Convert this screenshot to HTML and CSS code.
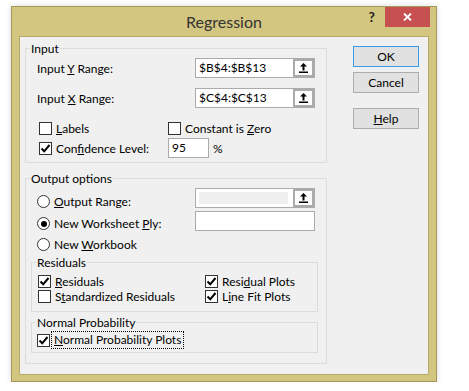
FILE: index.html
```html
<!DOCTYPE html>
<html lang="en">
<head>
    <meta charset="UTF-8">
    <meta name="viewport" content="width=device-width, initial-scale=1.0">
    <title>Regression</title>
    <link rel="stylesheet" href="styles.css">
</head>
<body>
<div class="window">
    <div class="titlebar">
        <span></span>
        <h1 class="title">Regression</h1>
        <div class="title-controls">
            <span class="help-mark">?</span>
            <span class="close-btn">
                <svg width="9" height="8" viewBox="0 0 9 8"><path d="M1 0.5 L8 7.5 M8 0.5 L1 7.5" stroke="#fff" stroke-width="1.8"/></svg>
            </span>
        </div>
    </div>

    <div class="client">
        <div class="left-col">
            <!-- Input -->
            <fieldset class="group group-input">
                <legend>Input</legend>
                <div class="range-row">
                    <span class="range-label">Input <u>Y</u> Range:</span>
                    <div class="ref-box">
                        <span class="ref-text">$B$4:$B$13</span>
                        <span class="ref-btn"><span class="ref-face">
                            <svg width="9" height="10" viewBox="0 0 9 10"><path d="M4.5 0 L8 3.6 L5.5 3.6 L5.5 7.5 L3.5 7.5 L3.5 3.6 L1 3.6 Z" fill="#000"/><rect x="0" y="8.5" width="9" height="1.5" fill="#000"/></svg>
                        </span></span>
                    </div>
                </div>
                <div class="range-row">
                    <span class="range-label">Input <u>X</u> Range:</span>
                    <div class="ref-box">
                        <span class="ref-text">$C$4:$C$13</span>
                        <span class="ref-btn"><span class="ref-face">
                            <svg width="9" height="10" viewBox="0 0 9 10"><path d="M4.5 0 L8 3.6 L5.5 3.6 L5.5 7.5 L3.5 7.5 L3.5 3.6 L1 3.6 Z" fill="#000"/><rect x="0" y="8.5" width="9" height="1.5" fill="#000"/></svg>
                        </span></span>
                    </div>
                </div>
                <div class="check-grid input-checks">
                    <div class="choice"><span class="cb"></span><span><u>L</u>abels</span></div>
                    <div class="choice"><span class="cb"></span><span>Constant is <u>Z</u>ero</span></div>
                    <div class="choice"><span class="cb"><svg width="11" height="11" viewBox="0 0 11 11"><path d="M1.5 5.5 L4.2 8.3 L9.5 2" fill="none" stroke="#000" stroke-width="2"/></svg></span><span>Con<u>f</u>idence Level:</span></div>
                    <div class="choice"><span class="small-field">95</span><span class="pct">%</span></div>
                </div>
            </fieldset>

            <!-- Output options -->
            <fieldset class="group group-output">
                <legend>Output options</legend>
                <div class="opt-row row-1">
                    <div class="choice"><span class="rb"></span><span><u>O</u>utput Range:</span></div>
                    <div class="ref-box">
                        <span class="ref-text disabled"><span class="disabled-fill"></span></span>
                        <span class="ref-btn"><span class="ref-face">
                            <svg width="9" height="10" viewBox="0 0 9 10"><path d="M4.5 0 L8 3.6 L5.5 3.6 L5.5 7.5 L3.5 7.5 L3.5 3.6 L1 3.6 Z" fill="#000"/><rect x="0" y="8.5" width="9" height="1.5" fill="#000"/></svg>
                        </span></span>
                    </div>
                </div>
                <div class="opt-row row-2">
                    <div class="choice"><span class="rb on"></span><span>New Worksheet <u>P</u>ly:</span></div>
                    <div class="plain-field"></div>
                </div>
                <div class="opt-row row-3">
                    <div class="choice"><span class="rb"></span><span>New <u>W</u>orkbook</span></div>
                </div>

                <fieldset class="group sub-group residuals">
                    <legend>Residuals</legend>
                    <div class="check-grid resid-checks">
                        <div class="choice"><span class="cb"><svg width="11" height="11" viewBox="0 0 11 11"><path d="M1.5 5.5 L4.2 8.3 L9.5 2" fill="none" stroke="#000" stroke-width="2"/></svg></span><span><u>R</u>esiduals</span></div>
                        <div class="choice"><span class="cb"><svg width="11" height="11" viewBox="0 0 11 11"><path d="M1.5 5.5 L4.2 8.3 L9.5 2" fill="none" stroke="#000" stroke-width="2"/></svg></span><span>Resi<u>d</u>ual Plots</span></div>
                        <div class="choice"><span class="cb"></span><span>S<u>t</u>andardized Residuals</span></div>
                        <div class="choice"><span class="cb"><svg width="11" height="11" viewBox="0 0 11 11"><path d="M1.5 5.5 L4.2 8.3 L9.5 2" fill="none" stroke="#000" stroke-width="2"/></svg></span><span>L<u>i</u>ne Fit Plots</span></div>
                    </div>
                </fieldset>

                <fieldset class="group sub-group normal">
                    <legend>Normal Probability</legend>
                    <div class="choice focus-row"><span class="cb"><svg width="11" height="11" viewBox="0 0 11 11"><path d="M1.5 5.5 L4.2 8.3 L9.5 2" fill="none" stroke="#000" stroke-width="2"/></svg></span><span class="focus-label"><u>N</u>ormal Probability Plots</span></div>
                </fieldset>
            </fieldset>
        </div>

        <div class="right-col">
            <button class="btn btn-default">OK</button>
            <button class="btn">Cancel</button>
            <button class="btn btn-help"><u>H</u>elp</button>
        </div>
    </div>
</div>
</body>
</html>
```

FILE: styles.css
```css
* {
    box-sizing: border-box;
}

body {
    margin: 0;
    background: #fff;
    font-family: "Segoe UI", Lato, sans-serif;
    font-size: 12px;
    color: #000;
}

u {
    text-underline-offset: 1px;
}

.window {
    margin: 6px 0 0 11px;
    width: 426px;
    height: 376px;
    background: #d3c680;
    border: 1px solid #a6985a;
    box-shadow: 0 0 6px rgba(0, 0, 0, 0.15);
    display: flex;
    flex-direction: column;
    padding: 0 7px 6px;
}

/* Title bar */
.titlebar {
    height: 29px;
    margin: 0 -7px;
    display: grid;
    grid-template-columns: 1fr auto 1fr;
}

.title {
    margin: 0;
    font-size: 16px;
    font-weight: normal;
    line-height: 29px;
    color: #333;
}

.title-controls {
    justify-self: end;
    display: flex;
    align-items: flex-start;
    margin-right: 6px;
}

.help-mark {
    font-weight: bold;
    font-size: 14px;
    line-height: 20px;
    color: #222;
    margin-right: 10px;
}

.close-btn {
    width: 45px;
    height: 20px;
    background: #c75050;
    display: flex;
    align-items: center;
    justify-content: center;
}

/* Client area */
.client {
    flex: 1;
    background: #f0f0f0;
    border: 1px solid #b8aa68;
    display: flex;
    padding: 4px 0 0 5px;
}

.left-col {
    width: 302px;
}

.right-col {
    margin-left: 26px;
    padding-top: 5px;
    display: flex;
    flex-direction: column;
}

/* Group boxes */
.group {
    margin: 0;
    padding: 0;
    border: 1px solid #dcdcdc;
    min-width: 0;
}

.group legend {
    margin-left: 4px;
    padding: 0 1px;
    line-height: 15px;
}

.group-input {
    padding: 2px 0 4px;
}

.group-output {
    margin-top: 8px;
    padding: 2px 0 10px;
}

.sub-group {
    margin: 0 8px 0 5px;
}

.residuals {
    padding: 4px 0 7px;
}

.normal {
    margin-top: 3px;
    padding: 2px 0 4px;
}

/* Range rows */
.range-row {
    display: flex;
    align-items: center;
    height: 20px;
    margin-bottom: 10px;
    padding-left: 11px;
}

.range-label {
    width: 158px;
    line-height: 15px;
}

.ref-box {
    width: 120px;
    height: 20px;
    border: 1px solid #ababab;
    background: #fff;
    display: flex;
}

.ref-text {
    flex: 1;
    padding-left: 3px;
    line-height: 18px;
}

.ref-text.disabled {
    padding: 3px 5px 3px 3px;
}

.disabled-fill {
    display: block;
    height: 100%;
    background: #f0f0f0;
}

.ref-btn {
    width: 21px;
    background: #ababab;
    padding: 2px;
}

.ref-face {
    display: flex;
    align-items: center;
    justify-content: center;
    height: 100%;
    background: #fff;
}

.plain-field {
    width: 120px;
    height: 20px;
    border: 1px solid #ababab;
    background: #fff;
}

/* Checkboxes and radios */
.choice {
    display: flex;
    align-items: center;
    line-height: 15px;
    white-space: nowrap;
}

.cb {
    width: 13px;
    height: 13px;
    flex: none;
    border: 1px solid #333;
    background: #fff;
    margin-right: 4px;
    display: flex;
    align-items: center;
    justify-content: center;
}

.rb {
    width: 13px;
    height: 13px;
    flex: none;
    border: 1px solid #333;
    border-radius: 50%;
    background: #fff;
    margin-right: 4px;
    display: flex;
    align-items: center;
    justify-content: center;
}

.rb.on::after {
    content: "";
    width: 6px;
    height: 6px;
    border-radius: 50%;
    background: #000;
}

.check-grid {
    display: grid;
    align-items: center;
}

.input-checks {
    grid-template-columns: 129px auto;
    grid-auto-rows: 20px;
    padding-left: 13px;
}

.resid-checks {
    grid-template-columns: 167px auto;
    grid-auto-rows: 15px;
    padding-left: 6px;
}

.small-field {
    width: 41px;
    height: 20px;
    border: 1px solid #ababab;
    background: #fff;
    padding-left: 3px;
    line-height: 18px;
}

.pct {
    margin-left: 4px;
}

/* Output option rows */
.opt-row {
    display: flex;
    align-items: flex-start;
    padding-left: 11px;
}

.opt-row .choice {
    width: 158px;
}

.row-1 {
    height: 23px;
}

.row-1 .choice {
    margin-top: 6px;
}

.row-2 {
    height: 22px;
}

.row-2 .choice {
    margin-top: 5px;
}

.row-3 {
    height: 22px;
}

.row-3 .choice {
    margin-top: 4px;
}

.focus-row {
    height: 16px;
    padding-left: 5px;
}

.focus-row .cb {
    margin-right: 2px;
}

.focus-label {
    outline: 1px dotted #000;
    padding: 0 2px;
    line-height: 16px;
}

/* Buttons */
.btn {
    width: 66px;
    height: 21px;
    margin: 0 0 5px;
    padding: 0;
    border: 1px solid #adadad;
    background: #e1e1e1;
    font-family: inherit;
    font-size: 12px;
    color: #000;
}

.btn-default {
    border-color: #3c9be8;
}

.btn-help {
    margin-top: 10px;
}
```
